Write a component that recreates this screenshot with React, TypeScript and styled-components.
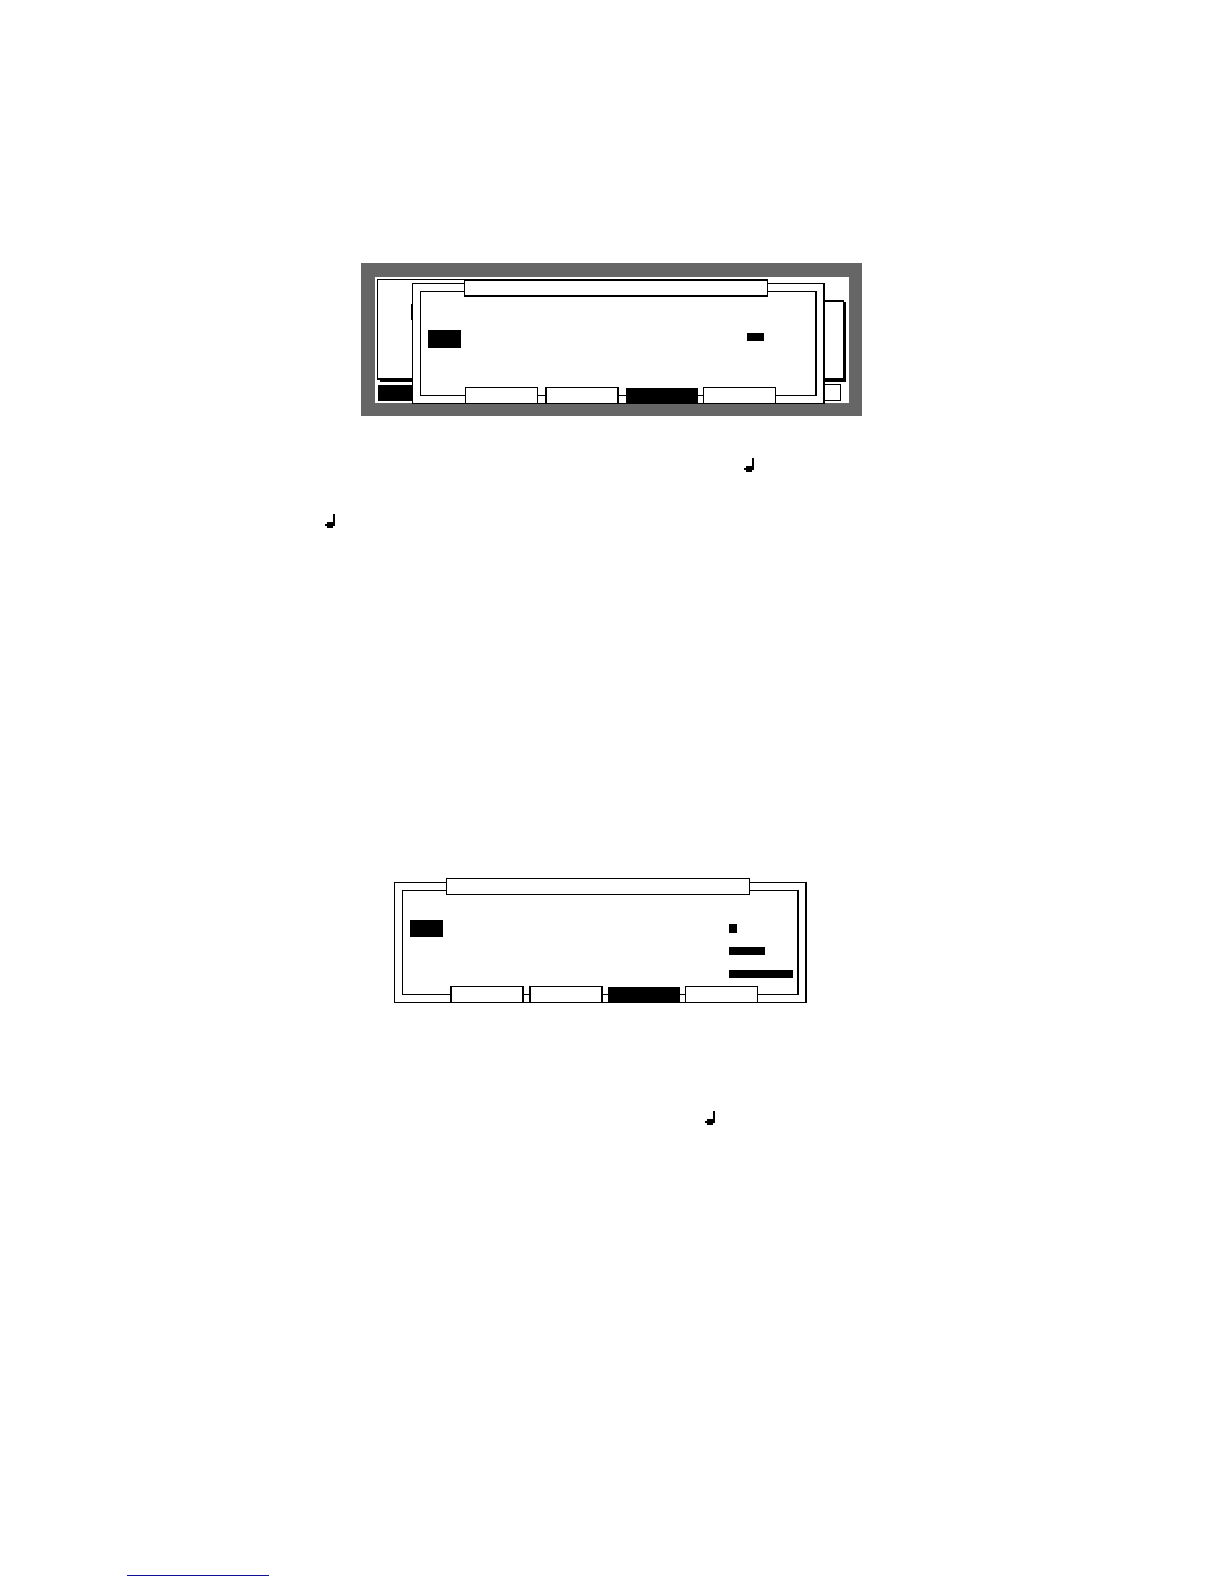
import React from "react";
import styled, { createGlobalStyle } from "styled-components";

const GlobalStyle = createGlobalStyle`
  *, *::before, *::after { box-sizing: border-box; }
  body {
    margin: 0;
    background: #fff;
    font-family: "Liberation Sans", Arial, sans-serif;
  }
`;

const Page = styled.main`
  display: flex;
  flex-direction: column;
  padding: 263px 128px 8px 127px;
`;

const LcdFigure = styled.figure`
  width: 100%;
  max-width: 501px;
  margin: 0 auto;
  padding: 14px 13px 13px 14px;
  background: #666;
`;

const Screen = styled.div`
  position: relative;
  height: 126px;
  background: #fff;
`;

const BackWindow = styled.div`
  position: absolute;
  top: 2px;
  left: 2px;
  width: 120px;
  height: 101px;
  border: 1px solid #000;
  border-bottom-width: 2px;
  box-shadow: 3px 2px 0 #000;
`;

const SideWindow = styled.div`
  position: absolute;
  top: 23px;
  right: 5px;
  width: 40px;
  height: 80px;
  border: 1px solid #000;
  border-width: 2px 1px 2px 1px;
  box-shadow: 2px 2px 0 #000;
`;

const Cursor = styled.div`
  position: absolute;
  top: 27px;
  left: 36px;
  width: 8px;
  height: 16px;
  background: #000;
`;

const BackKey = styled.button<{ $side: "left" | "right" }>`
  position: absolute;
  bottom: 2px;
  padding: 0;
  border: 1px solid #000;
  border-radius: 0;
  ${(p) =>
    p.$side === "left"
      ? "left: 3px; width: 44px; height: 16px; background: #000;"
      : "right: 8px; width: 40px; height: 17px; background: #fff;"}
`;

const Floating = styled.div`
  position: absolute;
  top: 6px;
  left: 37px;
  width: 413px;
`;

const Centered = styled.div`
  display: flex;
  justify-content: center;
  margin-top: 354px;
  padding-right: 22px;
`;

const Frame = styled.section`
  position: relative;
  width: 100%;
  max-width: 413px;
  padding: 7px 6px 7px 7px;
  border: 1px solid #000;
  border-right-width: 2px;
  background: #fff;
`;

const Body = styled.div<{ $top: number }>`
  display: grid;
  grid-template-columns: 319px 1fr;
  align-items: start;
  height: 105px;
  padding: ${(p) => p.$top}px 3px 0 7px;
  border: 1px solid #000;
  border-right-width: 2px;
`;

const TitleBar = styled.header<{ $heavy: boolean }>`
  position: absolute;
  top: -5px;
  left: 51px;
  width: 304px;
  height: ${(p) => (p.$heavy ? 18 : 17)}px;
  border: 1px solid #000;
  border-top-width: ${(p) => (p.$heavy ? 2 : 1)}px;
  border-bottom-width: ${(p) => (p.$heavy ? 2 : 1)}px;
  background: #fff;
`;

const Field = styled.div<{ $height: number }>`
  width: 33px;
  height: ${(p) => p.$height}px;
  background: #000;
`;

const Values = styled.div<{ $top: number }>`
  display: grid;
  grid-auto-rows: 23px;
  align-items: start;
  padding-top: ${(p) => p.$top}px;
`;

const Value = styled.div<{ $width: number; $height: number }>`
  width: ${(p) => p.$width}px;
  height: ${(p) => p.$height}px;
  background: #000;
`;

const SoftKeys = styled.nav<{ $left: number; $columns: string }>`
  position: absolute;
  bottom: -1px;
  left: ${(p) => p.$left}px;
  display: grid;
  grid-template-columns: ${(p) => p.$columns};
  align-items: end;
`;

type KeyKind = "plain" | "heavy" | "solid";

const keyWidth: Record<KeyKind, number> = { plain: 73, heavy: 74, solid: 72 };

const SoftKey = styled.button<{ $kind: KeyKind }>`
  width: ${(p) => keyWidth[p.$kind]}px;
  height: ${(p) => (p.$kind === "solid" ? 16 : 17)}px;
  padding: 0;
  border: 1px solid #000;
  border-width: ${(p) => (p.$kind === "heavy" ? "1px 2px" : "1px")};
  border-radius: 0;
  background: ${(p) => (p.$kind === "solid" ? "#000" : "#fff")};
`;

const NoteLine = styled.p<{ $indent: number; $space: number }>`
  display: flex;
  margin: ${(p) => p.$space}px 0 0;
  padding-left: ${(p) => p.$indent}px;
`;

const FooterLink = styled.a`
  width: 142px;
  height: 16px;
  margin-top: 435px;
  border-bottom: 1px solid #10109c;
`;

function QuarterNote() {
  return (
    <svg width="10" height="14" viewBox="0 0 10 14" shapeRendering="crispEdges" aria-hidden="true">
      <path d="M8 0h2v12h-2v2h-6v-2h-2v-2h2v-2h6z" fill="#000" />
    </svg>
  );
}

interface DialogProps {
  heavyTitle?: boolean;
  bodyTop: number;
  fieldHeight: number;
  valuesTop: number;
  values: { width: number; height: number }[];
  keysLeft: number;
  keyColumns: string;
  keys: KeyKind[];
}

function Dialog(props: DialogProps) {
  return (
    <Frame>
      <Body $top={props.bodyTop}>
        <Field $height={props.fieldHeight} />
        <Values $top={props.valuesTop}>
          {props.values.map((v, i) => (
            <Value key={i} $width={v.width} $height={v.height} />
          ))}
        </Values>
      </Body>
      <TitleBar $heavy={Boolean(props.heavyTitle)} />
      <SoftKeys $left={props.keysLeft} $columns={props.keyColumns}>
        {props.keys.map((kind, i) => (
          <SoftKey key={i} type="button" $kind={kind} aria-label={`Soft key ${i + 1}`} />
        ))}
      </SoftKeys>
    </Frame>
  );
}

export default function App() {
  return (
    <>
      <GlobalStyle />
      <Page>
        <LcdFigure>
          <Screen>
            <BackWindow />
            <SideWindow />
            <Cursor />
            <BackKey type="button" $side="left" aria-label="First key" />
            <BackKey type="button" $side="right" aria-label="Last key" />
            <Floating>
              <Dialog
                heavyTitle
                bodyTop={38}
                fieldHeight={18}
                valuesTop={3}
                values={[{ width: 17, height: 8 }]}
                keysLeft={52}
                keyColumns="80px 81px 77px 73px"
                keys={["plain", "heavy", "solid", "plain"]}
              />
            </Floating>
          </Screen>
        </LcdFigure>
        <NoteLine $indent={617} $space={42}>
          <QuarterNote />
        </NoteLine>
        <NoteLine $indent={198} $space={42}>
          <QuarterNote />
        </NoteLine>
        <Centered>
          <Dialog
            bodyTop={29}
            fieldHeight={17}
            valuesTop={4}
            values={[
              { width: 8, height: 9 },
              { width: 36, height: 8 },
              { width: 64, height: 8 },
            ]}
            keysLeft={55}
            keyColumns="79px 79px 77px 73px"
            keys={["heavy", "heavy", "solid", "plain"]}
          />
        </Centered>
        <NoteLine $indent={578} $space={108}>
          <QuarterNote />
        </NoteLine>
        <FooterLink href="#" aria-label="Website" />
      </Page>
    </>
  );
}
